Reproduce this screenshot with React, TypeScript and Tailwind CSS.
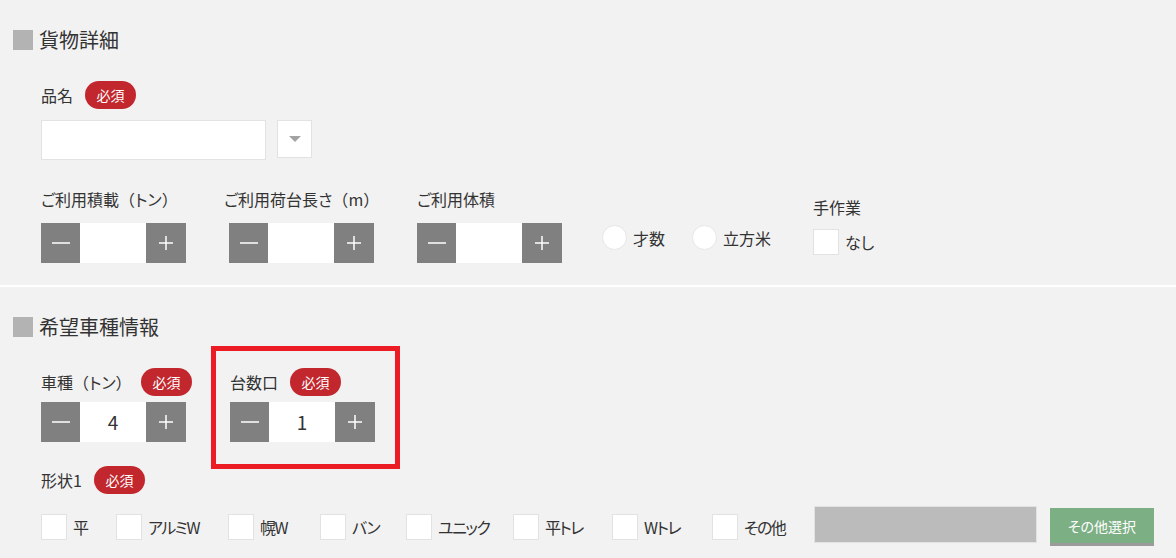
import { ReactNode } from 'react';

const font = "font-['Noto_Sans_CJK_JP','Noto_Sans',sans-serif] [font-feature-settings:'palt']";

function Badge() {
  return (
    <span className="inline-flex h-[28px] w-[51px] items-center justify-center rounded-full bg-[#c1272d] text-[14px] leading-none text-white">
      必須
    </span>
  );
}

function SectionTitle({ children }: { children: ReactNode }) {
  return (
    <h2 className="flex h-5 items-center gap-[6px] pl-[13px]">
      <span className="h-5 w-5 bg-[#b3b3b3]" />
      <span className="text-[20px] leading-5 text-[#333]">{children}</span>
    </h2>
  );
}

// full-width bracket, kept at its normal width
function Paren({ c }: { c: string }) {
  return <span className="[font-feature-settings:normal]">{c}</span>;
}

function Minus() {
  return (
    <svg width="18" height="18" viewBox="0 0 18 18">
      <line x1="0" y1="9" x2="18" y2="9" stroke="white" strokeWidth="1.5" />
    </svg>
  );
}

function Plus() {
  return (
    <svg width="16" height="16" viewBox="0 0 16 16">
      <line x1="1" y1="8" x2="15" y2="8" stroke="white" strokeWidth="1.5" />
      <line x1="8" y1="1" x2="8" y2="15" stroke="white" strokeWidth="1.5" />
    </svg>
  );
}

function Stepper({ value = '' }: { value?: string }) {
  return (
    <div className="flex h-10 w-[145px]">
      <button className="flex w-[39px] items-center justify-center bg-[#808080]">
        <Minus />
      </button>
      <div className="flex w-[66px] items-center justify-center bg-white text-[19px] text-[#333]">
        {value}
      </div>
      <button className="flex w-[40px] items-center justify-center bg-[#808080]">
        <Plus />
      </button>
    </div>
  );
}

function Label({ children }: { children: ReactNode }) {
  return <span className="whitespace-nowrap text-[16px] leading-5 text-[#333]">{children}</span>;
}

function Radio({ label }: { label: string }) {
  return (
    <label className="flex items-center gap-[6px]">
      <span className="h-[25px] w-[25px] rounded-full border border-[#e6e6e6] bg-white" />
      <span className="text-[16px] leading-5 text-[#333]">{label}</span>
    </label>
  );
}

function Check({ label, className }: { label: string; className: string }) {
  return (
    <label className={`flex flex-none items-center gap-[6px] ${className}`}>
      <span className="h-[26px] w-[26px] flex-none border border-[#e2e2e2] bg-white" />
      <span className="whitespace-nowrap text-[16px] leading-5 tracking-[-1.5px] text-[#333]">{label}</span>
    </label>
  );
}

const shapes = [
  { label: '平', w: 'w-[75px]' },
  { label: 'アルミW', w: 'w-[112px]' },
  { label: '幌W', w: 'w-[92px]' },
  { label: 'バン', w: 'w-[86px]' },
  { label: 'ユニック', w: 'w-[107px]' },
  { label: '平トレ', w: 'w-[99px]' },
  { label: 'Wトレ', w: 'w-[100px]' },
  { label: 'その他', w: 'w-[102px]' },
];

export default function App() {
  return (
    <div className={`min-h-screen overflow-hidden bg-[#f2f2f2] ${font}`}>
      {/* 貨物詳細 */}
      <section className="pt-[30px] pb-[22px]">
        <SectionTitle>貨物詳細</SectionTitle>
        <div className="pl-[41px]">
          <div className="mt-[31px] flex h-[28px] items-center gap-[12px]">
            <Label>品名</Label>
            <Badge />
          </div>
          <div className="mt-[11px] flex items-start gap-[11px]">
            <input className="h-10 w-[225px] border border-[#e2e2e2] bg-white outline-none" />
            <button className="flex h-[38px] w-[35px] items-center justify-center border border-[#e2e2e2] bg-white">
              <svg width="12" height="6" viewBox="0 0 12 6">
                <path d="M0 0h12L6 6z" fill="#a3a3a3" />
              </svg>
            </button>
          </div>

          <div className="mt-[29px] flex items-start">
            <div className="flex w-[145px] flex-none flex-col gap-[14px]">
              <Label>
                ご利用積載<Paren c="（" />トン<Paren c="）" />
              </Label>
              <Stepper />
            </div>
            <div className="ml-[38px] flex w-[150px] flex-none flex-col gap-[14px]">
              <Label>
                ご利用荷台長さ<Paren c="（" />m<Paren c="）" />
              </Label>
              <div className="pl-[5px]">
                <Stepper />
              </div>
            </div>
            <div className="ml-[43px] flex w-[146px] flex-none flex-col gap-[14px]">
              <Label>ご利用体積</Label>
              <Stepper />
            </div>
            <div className="ml-[39px] mt-[36px] flex w-[173px] flex-none items-center gap-[27px]">
              <Radio label="才数" />
              <Radio label="立方米" />
            </div>
            <div className="ml-[38px] mt-[8px] flex flex-col gap-[12px]">
              <Label>手作業</Label>
              <label className="flex items-center gap-[6px]">
                <span className="h-[26px] w-[26px] border border-[#e2e2e2] bg-white" />
                <span className="text-[16px] leading-5 text-[#333]">なし</span>
              </label>
            </div>
          </div>
        </div>
      </section>

      <div className="h-[2px] bg-white" />

      {/* 希望車種情報 */}
      <section className="pt-[30px]">
        <SectionTitle>希望車種情報</SectionTitle>
        <div className="pl-[41px]">
          <div className="mt-[31px] flex items-start">
            <div className="flex w-[145px] flex-none flex-col gap-[6px]">
              <div className="flex h-[28px] items-center justify-between">
                <Label>
                  車種<Paren c="（" />トン<Paren c="）" />
                </Label>
                <span className="-mr-[6px]">
                  <Badge />
                </span>
              </div>
              <Stepper value="4" />
            </div>
            <div className="relative ml-[44px] flex w-[145px] flex-none flex-col gap-[6px]">
              <div className="flex h-[28px] items-center gap-[12px]">
                <Label>台数口</Label>
                <Badge />
              </div>
              <Stepper value="1" />
              <div className="pointer-events-none absolute -top-[22px] -right-[25px] -bottom-[27px] -left-[19px] border-[5px] border-[#ec1c24]" />
            </div>
          </div>

          <div className="mt-[24px] flex h-[28px] items-center gap-[12px]">
            <Label>形状1</Label>
            <Badge />
          </div>

          <div className="mt-[12px] flex items-start">
            {shapes.map((s) => (
              <Check key={s.label} label={s.label} className={`mt-[8px] ${s.w}`} />
            ))}
            <div className="h-[37px] w-[223px] flex-none border border-[#e2e2e2] bg-[#bbbbbb]" />
            <button className="ml-[13px] mt-[2px] flex h-[38px] w-[104px] flex-none items-center justify-center border-b-[3px] border-[#9b9b9b] bg-[#7daf85] pt-[2px] text-[14px] text-white">
              その他選択
            </button>
          </div>
        </div>
      </section>
    </div>
  );
}
